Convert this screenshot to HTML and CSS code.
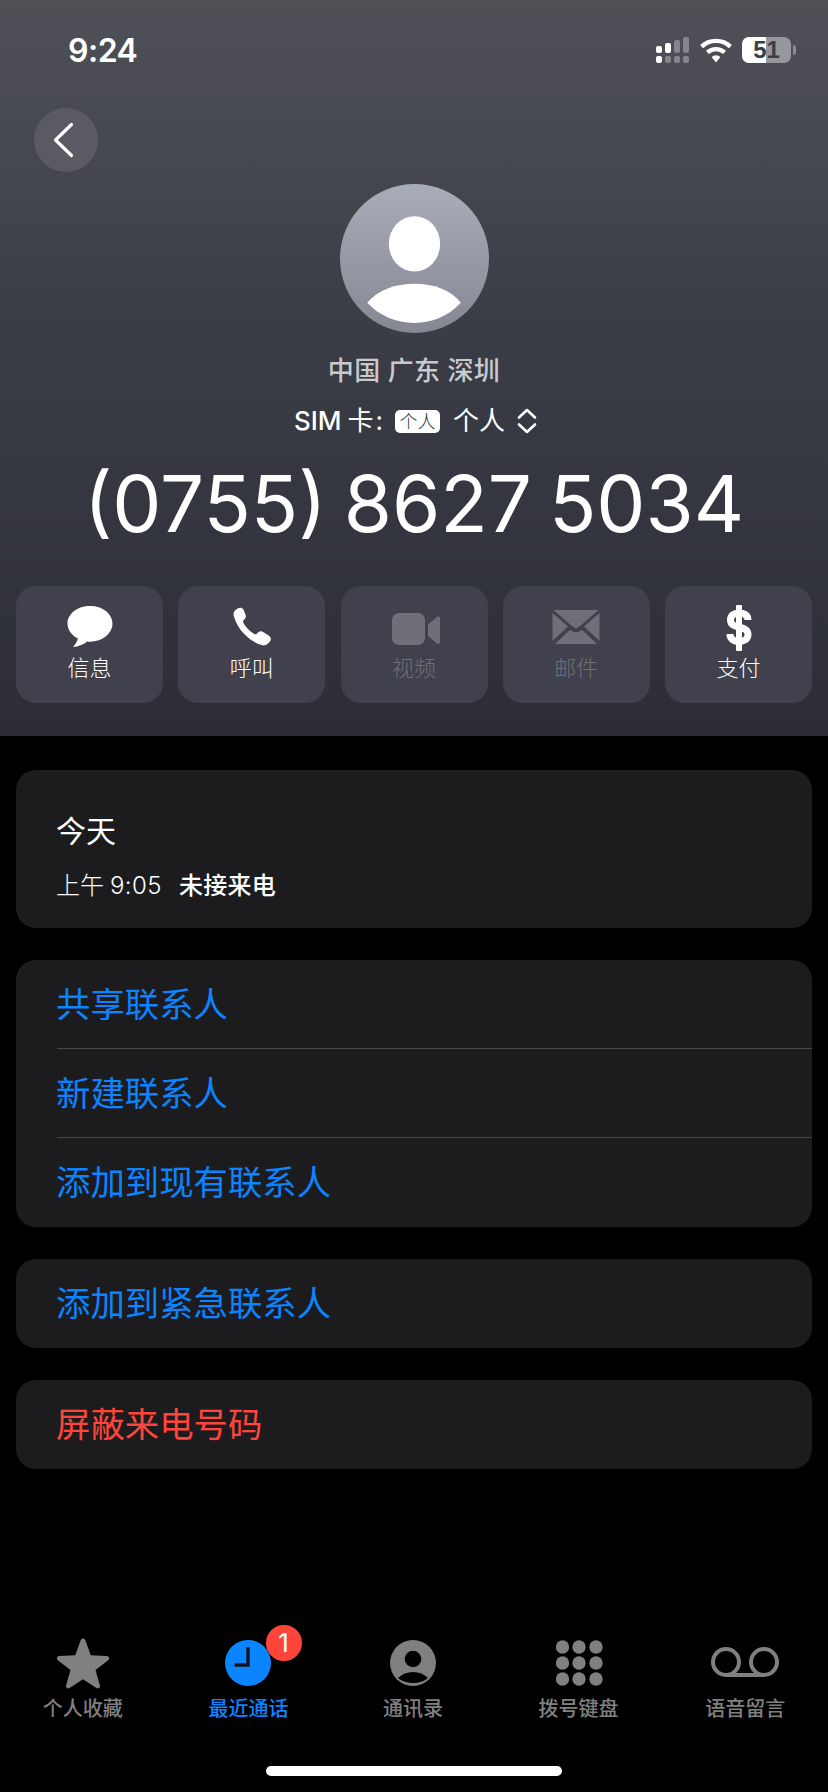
FILE: index.html
```html
<!DOCTYPE html>
<html lang="zh">
<head>
<meta charset="utf-8">
<title>通话详情</title>
<link rel="stylesheet" href="styles.css">
</head>
<body>
<div class="screen">
  <header class="hero">
    <div class="status">
      <span class="time">9:24</span>
      <div class="status-icons">
        <svg class="signal" width="34" height="26" viewBox="0 0 34 26"><g fill="#fff"><rect x="0" y="9" width="6" height="7" rx="2"/><rect x="9" y="6" width="6" height="10" rx="2"/><rect x="0" y="19" width="6" height="7" rx="2"/></g><g fill="#85868c"><rect x="18" y="3" width="6" height="13" rx="2"/><rect x="27" y="0" width="6" height="16" rx="2"/><rect x="9" y="19" width="6" height="7" rx="2"/><rect x="18" y="19" width="6" height="7" rx="2"/><rect x="27" y="19" width="6" height="7" rx="2"/></g></svg>
        <svg class="wifi" width="34" height="26" viewBox="0 0 34 26"><g fill="none" stroke="#fff" stroke-width="4.4"><path d="M2.6 9.6a21 21 0 0 1 28.8 0"/><path d="M8.4 15.4a13 13 0 0 1 17.2 0"/></g><path d="M12.6 20a6.5 6.5 0 0 1 8.8 0L17 25.5z" fill="#fff"/></svg>
        <div class="battery"><span class="battery-fill"></span><span class="battery-num">51</span></div>
        <span class="battery-nub"></span>
      </div>
    </div>
    <button class="back" type="button" aria-label="返回">
      <svg width="22" height="36" viewBox="0 0 22 36"><path d="M19.500 2.500 3.500 18l16 15.500" fill="none" stroke="#fff" stroke-width="3.200" stroke-linecap="round" stroke-linejoin="round"/></svg>
    </button>
    <div class="avatar">
      <svg width="149" height="149" viewBox="0 0 148 148"><defs><linearGradient id="av" x1="0" y1="0" x2="0" y2="1"><stop offset="0" stop-color="#a9adba"/><stop offset="1" stop-color="#858893"/></linearGradient></defs><circle cx="74" cy="74" r="74" fill="url(#av)"/><ellipse cx="74" cy="59.500" rx="25.500" ry="27.500" fill="#fff"/><path d="M27 118C38 105 55 99 74 99s36 6 46 19c-12 13-28 20-46 20s-35-7-47-20z" fill="#fff"/></svg>
    </div>
    <div class="location">中国 广东 深圳</div>
    <div class="sim">
      <span class="sim-latin">SIM</span><span class="sim-card">卡</span><span class="sim-colon">:</span>
      <span class="sim-tag">个人</span>
      <span class="sim-name">个人</span>
      <svg width="20" height="26" viewBox="0 0 20 26"><path d="M2 9.500 10 2l8 7.500M2 16.500 10 24l8-7.500" fill="none" stroke="#fff" stroke-width="2.600" stroke-linecap="round" stroke-linejoin="round"/></svg>
    </div>
    <div class="number">(0755) 8627 5034</div>
    <div class="actions">
      <div class="action">
        <svg class="action-icon" width="48" height="48" viewBox="0 0 48 48"><path d="M24 3C11.500 3 1.500 10.800 1.500 20.600c0 6.300 4.200 11.900 10.400 15-.6 2.800-2.300 5.700-4.100 7.300-.5.500-.1 1.200.6 1.100 4.400-.5 9.500-2.500 12.800-5.400 1 .1 1.900.2 2.800.2 12.500 0 22.500-8.300 22.500-18.200S36.500 3 24 3z" fill="#fff"/></svg>
        <span>信息</span>
      </div>
      <div class="action">
        <svg class="action-icon" width="48" height="48" viewBox="0 0 48 48"><path d="M15.500 6.500c-1.300-1.900-3.600-2.400-5.500-1.200L8.200 6.400C5.900 7.800 5 10.600 5.800 13.200c2.100 6.900 5.700 13 10.400 17.900 5 5.100 10.800 8.800 17.400 11 2.500.8 5.200.1 6.900-2l1.400-1.700c1.500-1.800 1.100-4.400-.9-5.700l-5.900-3.800c-1.500-1-3.500-.8-4.800.4l-1.600 1.500c-.7.600-1.600.7-2.400.2-2.300-1.400-4.500-3.100-6.400-5.100-1.800-1.900-3.400-4-4.600-6.200-.4-.8-.3-1.700.3-2.400l1.300-1.500c1.200-1.300 1.300-3.300.3-4.800z" fill="#fff"/></svg>
        <span>呼叫</span>
      </div>
      <div class="action off">
        <svg class="action-icon" width="48" height="48" viewBox="-2 -2 48 48"><rect x="0" y="8" width="33" height="32" rx="7" fill="#6e6f78"/><path d="M36 19.500 45 12c1.100-.9 3-.3 3 1.300v24c0 1.600-1.900 2.200-3 1.300l-9-7.500z" fill="#6e6f78"/></svg>
        <span>视频</span>
      </div>
      <div class="action off">
        <svg class="action-icon" width="48" height="48" viewBox="0 0 48 48"><path d="M3 7h42c.7 0 1 .2 1 .4L27 24c-1.800 1.500-4.200 1.500-6 0L2 7.400c0-.2.300-.4 1-.4z" fill="#6e6f78"/><path d="M.500 10v28l15.500-14.500zM47.500 10v28L32 23.500zM3 41h42L29.800 26.500l-1 .9c-2.800 2.400-6.800 2.400-9.600 0l-1-.9z" fill="#6e6f78"/></svg>
        <span>邮件</span>
      </div>
      <div class="action">
        <svg class="action-icon" width="48" height="48" viewBox="0 0 48 48"><rect x="21" y="2" width="6" height="46" rx="1" fill="#fff"/><path d="M33 17C33 12 29 10 24 10 19 10 15.500 12.500 15.500 17 15.500 27 33 21.500 33 31.500 33 36 29 38.500 24 38.500 19 38.500 15 36 15 31" fill="none" stroke="#fff" stroke-width="7"/></svg>
        <span>支付</span>
      </div>
    </div>
  </header>

  <main class="content">
    <section class="card today">
      <div class="today-title">今天</div>
      <div class="today-line"><span class="today-am">上午</span><span class="today-time">9:05</span><strong>未接来电</strong></div>
    </section>
    <section class="card">
      <div class="row blue">共享联系人</div>
      <div class="row blue">新建联系人</div>
      <div class="row blue">添加到现有联系人</div>
    </section>
    <section class="card">
      <div class="row blue">添加到紧急联系人</div>
    </section>
    <section class="card">
      <div class="row red">屏蔽来电号码</div>
    </section>
  </main>

  <nav class="tabs">
    <div class="tab">
      <svg width="52" height="52" viewBox="0 0 52 52"><path d="M26 1.500c1 0 1.800.6 2.200 1.600l5.600 15.200 16 .7c2.300.1 3.200 2.900 1.400 4.300L38.500 33l4.400 15.500c.6 2.100-1.700 3.800-3.500 2.500L26 42.200 12.600 51c-1.800 1.200-4.100-.4-3.500-2.500L13.500 33 .8 23.300c-1.800-1.400-.9-4.200 1.400-4.300l16-.7 5.600-15.200c.4-1 1.200-1.600 2.200-1.600z" fill="#808080"/></svg>
      <span>个人收藏</span>
    </div>
    <div class="tab active">
      <svg width="52" height="52" viewBox="0 0 52 52"><circle cx="26" cy="26" r="23" fill="#0a84ff"/><path d="M26 10v18H12.500" fill="none" stroke="#14141c" stroke-width="3.400"/></svg>
      <span>最近通话</span>
      <b class="badge">1</b>
    </div>
    <div class="tab shift">
      <svg width="52" height="52" viewBox="0 0 52 52"><circle cx="26" cy="26" r="23" fill="#808080"/><circle cx="26" cy="22" r="8.300" fill="#000"/><path d="M11 41c4-4 9-6 15-6s11 2 15 6c-4 3.500-9 5-15 5s-11-1.500-15-5z" fill="#000"/></svg>
      <span>通讯录</span>
    </div>
    <div class="tab shift">
      <svg width="52" height="52" viewBox="0 0 52 52"><g fill="#808080"><circle cx="9.500" cy="10" r="6.700"/><circle cx="26" cy="10" r="6.700"/><circle cx="43" cy="10" r="6.700"/><circle cx="9.500" cy="26" r="6.700"/><circle cx="26" cy="26" r="6.700"/><circle cx="43" cy="26" r="6.700"/><circle cx="9.500" cy="42" r="6.700"/><circle cx="26" cy="42" r="6.700"/><circle cx="43" cy="42" r="6.700"/></g></svg>
      <span>拨号键盘</span>
    </div>
    <div class="tab">
      <svg width="70" height="52" viewBox="0 0 70 52"><g fill="none" stroke="#808080" stroke-width="4"><circle cx="16" cy="25" r="13"/><circle cx="54" cy="25" r="13"/><path d="M16 38h38"/></g></svg>
      <span>语音留言</span>
    </div>
  </nav>
  <div class="home-bar"></div>
</div>
</body>
</html>
```

FILE: styles.css
```css
* { box-sizing: border-box; }
html, body { margin: 0; padding: 0; background: #000; }
body {
  font-family: "Inter", "Noto Sans CJK SC", sans-serif;
  color: #fff;
}
.screen {
  width: 828px;
  height: 1792px;
  display: flex;
  flex-direction: column;
  overflow: hidden;
  background: #000;
}
.hero {
  height: 736px;
  background: linear-gradient(180deg, #505157 0%, #3c3e47 42%, #2c2d36 100%);
  display: flex;
  flex-direction: column;
  align-items: center;
}
.status {
  width: 100%;
  height: 100px;
  padding: 34px 32px 0 68px;
  display: flex;
  justify-content: space-between;
  align-items: flex-start;
}
.time {
  font-size: 32px;
  line-height: 34px;
  font-weight: 600;
  letter-spacing: -0.5px;
}
.status-icons {
  display: flex;
  align-items: center;
  padding-top: 3px;
  height: 29px;
}
.signal { margin-right: 9px; }
.wifi { margin-right: 9px; }
.battery {
  position: relative;
  width: 49px;
  height: 26px;
  border-radius: 7px;
  background: #97989d;
  overflow: hidden;
  text-align: center;
}
.battery-fill {
  position: absolute;
  left: 0;
  top: 0;
  bottom: 0;
  width: 24px;
  background: #fff;
}
.battery-num {
  position: relative;
  color: #3d3e45;
  font-size: 24px;
  line-height: 26px;
  font-weight: 600;
  font-family: "Liberation Sans", sans-serif;
}
.battery-nub {
  width: 3px;
  height: 10px;
  margin-left: 2px;
  background: #8b8c92;
  border-radius: 0 3px 3px 0;
}
.back {
  align-self: flex-start;
  width: 64px;
  height: 64px;
  margin: 8px 0 0 34px;
  padding: 0 6px 0 0;
  border: 0;
  border-radius: 50%;
  background: #595a62;
  display: flex;
  align-items: center;
  justify-content: center;
}
.avatar {
  width: 149px;
  height: 149px;
  margin-top: 12px;
}
.avatar svg { display: block; }
.location {
  margin-top: 20px;
  height: 36px;
  font-size: 26px;
  line-height: 36px;
  letter-spacing: 0.3px;
  color: #c9cacd;
  font-weight: 500;
}
.sim {
  margin-top: 14px;
  height: 36px;
  padding-left: 3px;
  display: flex;
  align-items: center;
  font-size: 26px;
  line-height: 36px;
}
.sim-latin { font-weight: 500; margin-right: 6px; }
.sim-colon { margin-left: 2px; }
.sim-tag {
  margin: 0 13px 0 12px;
  width: 45px;
  height: 23px;
  border-radius: 5px;
  background: #fff;
  color: #33343c;
  font-size: 18px;
  line-height: 23px;
  font-weight: 300;
  text-align: center;
}
.sim-name { margin-right: 12px; }
.number {
  margin-top: 19px;
  height: 92px;
  font-size: 78px;
  line-height: 92px;
  font-weight: 400;
  word-spacing: -5px;
  white-space: nowrap;
}
.actions {
  width: 100%;
  margin-top: 36px;
  padding: 0 16px;
  display: grid;
  grid-template-columns: repeat(5, 147px);
  justify-content: space-between;
}
.action {
  height: 117px;
  border-radius: 20px;
  background: #40414d;
  display: flex;
  flex-direction: column;
  align-items: center;
  font-size: 22px;
  line-height: 30px;
  font-weight: 300;
  padding-top: 17px;
}
.action-icon {
  display: block;
  margin-bottom: 2px;
  overflow: visible;
}
.action.off { color: #6e6f78; }
.content {
  padding: 34px 16px 0;
  display: flex;
  flex-direction: column;
  gap: 32px;
}
.card {
  background: #1c1c1e;
  border-radius: 20px;
  overflow: hidden;
}
.today {
  height: 158px;
  padding: 40px 40px 0;
}
.today-title {
  font-size: 30px;
  line-height: 42px;
}
.today-line {
  margin-top: 17px;
  font-size: 24px;
  line-height: 34px;
  display: flex;
  align-items: baseline;
}
.today-am { margin-right: 6px; font-weight: 300; }
.today-time { margin-right: 17px; font-weight: 300; letter-spacing: 0.4px; }
.today-line strong { font-weight: 500; letter-spacing: 0.3px; }
.row {
  position: relative;
  height: 89px;
  padding: 2px 0 0 40px;
  font-size: 34.400px;
  line-height: 86px;
}
.row + .row::before {
  content: "";
  position: absolute;
  top: -1px;
  left: 41px;
  right: 0;
  height: 1px;
  background: #48484a;
}
.blue { color: #0a84ff; }
.red { color: #ff453a; }
.tabs {
  margin-top: 168px;
  display: grid;
  grid-template-columns: repeat(5, 1fr);
}
.tab {
  position: relative;
  display: flex;
  flex-direction: column;
  align-items: center;
  color: #808080;
  font-size: 20px;
  line-height: 28px;
  font-weight: 500;
}
.tab.shift { padding-right: 2px; }
.tab svg { display: block; margin-bottom: 6px; }
.tab.active { color: #0a84ff; }
.badge {
  position: absolute;
  top: -12px;
  left: 100px;
  width: 36px;
  height: 36px;
  border-radius: 50%;
  background: #ff453a;
  color: #fff;
  font-size: 26px;
  line-height: 36px;
  font-weight: 400;
  text-align: center;
}
.home-bar {
  width: 296px;
  height: 10px;
  margin: 43px auto 0;
  border-radius: 5px;
  background: #fff;
}
```
